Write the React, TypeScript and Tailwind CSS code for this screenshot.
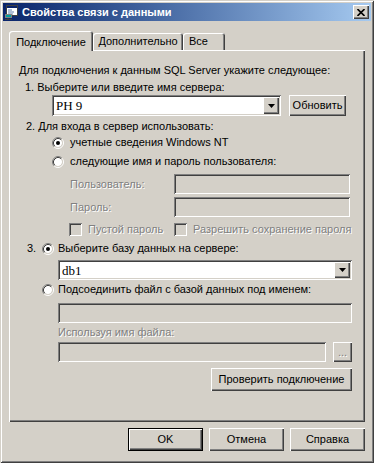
const sunken =
  "shadow-[inset_1px_1px_0_#808080,inset_-1px_-1px_0_#ffffff,inset_2px_2px_0_#404040,inset_-2px_-2px_0_#d4d0c8]";
const raised =
  "shadow-[inset_1px_1px_0_#ffffff,inset_-1px_-1px_0_#404040,inset_-2px_-2px_0_#808080]";
const raisedDefault =
  "shadow-[inset_0_0_0_1px_#000000,inset_2px_2px_0_#ffffff,inset_-2px_-2px_0_#404040,inset_-3px_-3px_0_#808080]";
const grayText = "text-[#808080] [text-shadow:1px_1px_0_#ffffff]";
const tabEdge = "shadow-[inset_1px_1px_0_#ffffff,inset_-1px_0_0_#404040,inset_-2px_0_0_#808080]";

function Radio({ checked }: { checked?: boolean }) {
  return (
    <svg width="12" height="12" viewBox="0 0 12 12" className="shrink-0">
      <circle cx="6" cy="6" r="4" fill="#fff" />
      <path d="M2.11 9.89A5.5 5.5 0 0 1 9.89 2.11" fill="none" stroke="#808080" />
      <path d="M9.89 2.11A5.5 5.5 0 0 1 2.11 9.89" fill="none" stroke="#fff" />
      <path d="M2.82 9.18A4.5 4.5 0 0 1 9.18 2.82" fill="none" stroke="#404040" />
      <path d="M9.18 2.82A4.5 4.5 0 0 1 2.82 9.18" fill="none" stroke="#d4d0c8" />
      {checked && <circle cx="6" cy="6" r="2" fill="#000" />}
    </svg>
  );
}

function Check() {
  return <div className={`w-[13px] h-[13px] shrink-0 bg-[#d4d0c8] ${sunken}`} />;
}

function Combo({ value, className }: any) {
  return (
    <div className={`flex items-stretch bg-white p-[2px] ${sunken} ${className}`}>
      <span className="flex-1 flex items-center pl-[2px] font-['Liberation_Serif','Times_New_Roman',serif] text-[13px] leading-none">
        {value}
      </span>
      <div className={`w-[16px] bg-[#d4d0c8] flex items-center justify-center ${raised}`}>
        <svg width="7" height="4" viewBox="0 0 7 4">
          <path d="M0 0h7L3.5 4z" fill="#000" />
        </svg>
      </div>
    </div>
  );
}

function Btn({ label, className, isDefault }: any) {
  return (
    <div
      className={`flex items-center justify-center bg-[#d4d0c8] ${isDefault ? raisedDefault : raised} ${className}`}
    >
      {label}
    </div>
  );
}

function Field({ className }: any) {
  return <div className={`bg-[#d4d0c8] ${sunken} ${className}`} />;
}

function AppIcon() {
  return (
    <svg width="16" height="16" viewBox="0 0 16 16" className="shrink-0">
      <rect x="2.5" y="1.5" width="11" height="10" fill="#fff" stroke="#404040" />
      <rect x="3" y="2" width="10" height="2" fill="#0a246a" />
      <path d="M4 6h4M4 8h6M4 10h5" stroke="#6080b0" />
      <rect x="1" y="10" width="7" height="4" fill="#808080" />
      <rect x="2" y="11" width="5" height="2" fill="#00a0a0" />
      <path d="M4 14v1.5M1 15.5h7" stroke="#404040" />
    </svg>
  );
}

export default function App() {
  return (
    <div className="w-[374px] h-[463px] bg-[#d4d0c8] p-[3px] font-['Liberation_Sans',Arial,sans-serif] text-[11px] text-black shadow-[inset_1px_1px_0_#d4d0c8,inset_-1px_-1px_0_#404040,inset_2px_2px_0_#ffffff,inset_-2px_-2px_0_#808080]">
      {/* title bar */}
      <div className="h-[18px] flex items-center pl-[1px] pr-[2px] bg-linear-to-r from-[#0a246a] to-[#a6caf0]">
        <AppIcon />
        <span className="ml-[2px] text-white font-bold whitespace-nowrap">Свойства связи с данными</span>
        <div className={`ml-auto w-[16px] h-[14px] bg-[#d4d0c8] flex items-center justify-center ${raised}`}>
          <svg width="8" height="7" viewBox="0 0 8 7">
            <path d="M0.5 0L7.5 7M7.5 0L0.5 7" stroke="#000" strokeWidth="1.6" />
          </svg>
        </div>
      </div>

      <div className="px-[6px]">
        {/* tabs */}
        <div className="mt-[10px] h-[19px] flex items-end relative z-10">
          <div className={`h-[20px] -mb-px w-[84px] bg-[#d4d0c8] rounded-t-[3px] flex justify-center pt-[3px] ${tabEdge}`}>
            Подключение
          </div>
          <div className={`h-[17px] w-[90px] bg-[#d4d0c8] rounded-t-[3px] flex items-center justify-center ${tabEdge}`}>
            Дополнительно
          </div>
          <div className={`h-[17px] w-[42px] bg-[#d4d0c8] rounded-t-[3px] flex items-center pl-[6px] ${tabEdge}`}>
            Все
          </div>
        </div>

        {/* panel */}
        <div className="h-[372px] w-[356px] flex flex-col pt-[14px] shadow-[inset_1px_1px_0_#ffffff,inset_-1px_-1px_0_#404040,inset_-2px_-2px_0_#808080] whitespace-nowrap leading-[13px]">
          <div className="h-[13px] pl-[10px]">Для подключения к данным SQL Server укажите следующее:</div>
          <div className="mt-[4px] h-[13px] pl-[16px]">1. Выберите или введите имя сервера:</div>
          <div className="mt-[1px] h-[21px] flex pl-[43px]">
            <Combo value="PH 9" className="w-[229px] h-full" />
            <Btn label="Обновить" className="ml-[8px] w-[57px] h-full" />
          </div>
          <div className="mt-[4px] h-[13px] pl-[17px]">2. Для входа в сервер использовать:</div>
          <div className="mt-[3px] h-[13px] flex items-center gap-[6px] pl-[43px]">
            <Radio checked />
            <span>учетные сведения Windows NT</span>
          </div>
          <div className="mt-[6px] h-[13px] flex items-center gap-[6px] pl-[43px]">
            <Radio />
            <span>следующие имя и пароль пользователя:</span>
          </div>
          <div className="mt-[6px] h-[20px] flex items-center pl-[61px]">
            <span className={`w-[104px] ${grayText}`}>Пользователь:</span>
            <Field className="w-[176px] h-full" />
          </div>
          <div className="mt-[3px] h-[20px] flex items-center pl-[61px]">
            <span className={`w-[104px] ${grayText}`}>Пароль:</span>
            <Field className="w-[176px] h-full" />
          </div>
          <div className="mt-[6px] h-[13px] flex items-center pl-[60px]">
            <div className="w-[105px] flex items-center gap-[6px]">
              <Check />
              <span className={grayText}>Пустой пароль</span>
            </div>
            <div className="flex items-center gap-[6px]">
              <Check />
              <span className={grayText}>Разрешить сохранение пароля</span>
            </div>
          </div>
          <div className="mt-[6px] h-[13px] flex items-center pl-[18px]">
            <span className="w-[15px]">3.</span>
            <Radio checked />
            <span className="ml-[4px]">Выберите базу данных на сервере:</span>
          </div>
          <div className="mt-[5px] h-[20px] pl-[49px]">
            <Combo value="db1" className="w-[294px] h-full" />
          </div>
          <div className="mt-[3px] h-[13px] flex items-center pl-[33px]">
            <Radio />
            <span className="ml-[4px]">Подсоединить файл с базой данных под именем:</span>
          </div>
          <div className="mt-[7px] h-[20px] pl-[49px]">
            <Field className="w-[294px] h-full" />
          </div>
          <div className={`mt-[3px] h-[13px] pl-[49px] ${grayText}`}>Используя имя файла:</div>
          <div className="mt-[3px] h-[20px] flex pl-[49px]">
            <Field className="w-[268px] h-full" />
            <Btn label={<span className={grayText}>...</span>} className="ml-[7px] w-[19px] h-full" />
          </div>
          <div className="mt-[6px] flex justify-end pr-[13px]">
            <Btn label="Проверить подключение" className="w-[141px] h-[23px]" />
          </div>
        </div>

        {/* dialog buttons */}
        <div className="mt-[6px] flex justify-end gap-[6px]">
          <Btn label="OK" isDefault className="w-[75px] h-[23px]" />
          <Btn label="Отмена" className="w-[75px] h-[23px]" />
          <Btn label="Справка" className="w-[75px] h-[23px]" />
        </div>
      </div>
    </div>
  );
}
